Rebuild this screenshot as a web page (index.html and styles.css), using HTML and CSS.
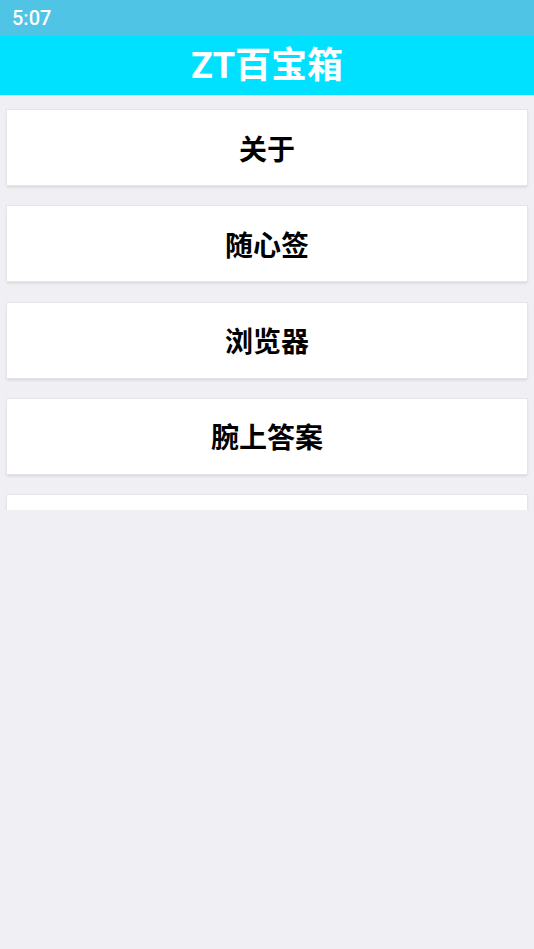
FILE: index.html
```html
<!DOCTYPE html>
<html lang="zh-CN">
<head>
    <meta charset="UTF-8">
    <meta name="viewport" content="width=device-width, initial-scale=1.0">
    <title>ZT百宝箱</title>
    <link rel="stylesheet" href="styles.css">
</head>
<body>

    <div class="status-bar">5:07</div>

    <div class="app-header">
        <h1>ZT百宝箱</h1>
    </div>

    <div class="tool-list">
        <div class="tool-card">关于</div>
        <div class="tool-card">随心签</div>
        <div class="tool-card">浏览器</div>
        <div class="tool-card">腕上答案</div>
        <div class="tool-card"></div>
        <div class="tool-card"></div>
    </div>

</body>
</html>
```

FILE: styles.css
```css
/* General styling */
body, html {
    margin: 0;
    padding: 0;
    height: 100%;
    overflow: hidden;
    background: #efeff4;
    font-family: Roboto, "Noto Sans CJK SC", sans-serif;
}

/* Status bar */
.status-bar {
    height: 36px;
    background: #50c4e4;
    color: #fff;
    font-size: 20px;
    font-weight: 500;
    line-height: 36px;
    padding-left: 12px;
    box-sizing: border-box;
}

/* Title bar */
.app-header {
    height: 59px;
    background: #00e1ff;
    display: flex;
    align-items: center;
    justify-content: center;
}

.app-header h1 {
    margin: 0;
    color: #fff;
    font-size: 36px;
    font-weight: bold;
    line-height: 1;
}

/* Tool list (scroll area) */
.tool-list {
    height: 415px;
    overflow: hidden;
    padding: 15px 7px 0;
    box-sizing: border-box;
    display: flex;
    flex-direction: column;
    gap: 21.25px;
}

.tool-card {
    flex: 0 0 75px;
    background: #fff;
    box-shadow: 0 0 0 1px #e4e4ea, 0 2px 3px rgba(0, 0, 0, 0.12);
    display: flex;
    align-items: center;
    justify-content: center;
    color: #000;
    font-size: 28px;
    font-weight: bold;
}
```
